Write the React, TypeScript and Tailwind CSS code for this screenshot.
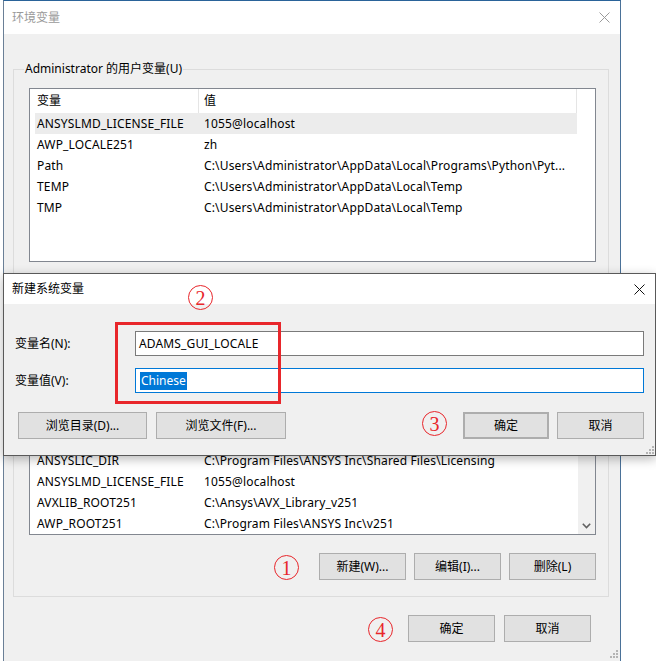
import React from "react";

type Row = { name: string; value: string; hl?: boolean };

const userRows: Row[] = [
  { name: "ANSYSLMD_LICENSE_FILE", value: "1055@localhost", hl: true },
  { name: "AWP_LOCALE251", value: "zh" },
  { name: "Path", value: "C:\\Users\\Administrator\\AppData\\Local\\Programs\\Python\\Pyt..." },
  { name: "TEMP", value: "C:\\Users\\Administrator\\AppData\\Local\\Temp" },
  { name: "TMP", value: "C:\\Users\\Administrator\\AppData\\Local\\Temp" },
];

const sysRows: Row[] = [
  { name: "", value: "" },
  { name: "", value: "" },
  { name: "", value: "" },
  { name: "", value: "" },
  { name: "ANSYSLIC_DIR", value: "C:\\Program Files\\ANSYS Inc\\Shared Files\\Licensing" },
  { name: "ANSYSLMD_LICENSE_FILE", value: "1055@localhost" },
  { name: "AVXLIB_ROOT251", value: "C:\\Ansys\\AVX_Library_v251" },
  { name: "AWP_ROOT251", value: "C:\\Program Files\\ANSYS Inc\\v251" },
];

function CloseX({ color }: { color: string }) {
  return (
    <svg width="11" height="11" viewBox="0 0 11 11">
      <path d="M0.5 0.5 L10.5 10.5 M10.5 0.5 L0.5 10.5" stroke={color} strokeWidth="1" fill="none" />
    </svg>
  );
}

function Grip() {
  return (
    <svg width="10" height="10" viewBox="0 0 10 10">
      <g fill="#b4b4b4">
        <rect x="8" y="2" width="2" height="2" />
        <rect x="5" y="5" width="2" height="2" />
        <rect x="8" y="5" width="2" height="2" />
        <rect x="2" y="8" width="2" height="2" />
        <rect x="5" y="8" width="2" height="2" />
        <rect x="8" y="8" width="2" height="2" />
      </g>
    </svg>
  );
}

function Btn({ label, w, extra = "" }: { label: string; w: string; extra?: string }) {
  return (
    <div
      className={`${w} h-[27px] flex items-center justify-center bg-[#e1e1e1] border border-[#adadad] ${extra}`}
    >
      {label}
    </div>
  );
}

function ListBox({ rows, height, scroll }: { rows: Row[]; height: string; scroll?: boolean }) {
  return (
    <div className={`ml-[15px] mr-[12px] mt-[18px] ${height} border border-[#828790] bg-white flex overflow-hidden`}>
      <div className="flex-1 pl-[5px] flex flex-col">
        <div className="flex h-[24px] shrink-0">
          <div className="w-[164px] pl-[2px] flex items-center border-r border-[#e5e5e5]">{scroll ? "" : "变量"}</div>
          <div className="w-[378px] pl-[5px] flex items-center border-r border-[#e5e5e5]">{scroll ? "" : "值"}</div>
        </div>
        {rows.map((r, i) => (
          <div
            key={i}
            className={`flex h-[21px] w-[542px] shrink-0 leading-[21px] tracking-[0.15px] ${r.hl ? "bg-[#ececec]" : ""}`}
          >
            <div className="w-[164px] pl-[2px] whitespace-nowrap overflow-hidden">{r.name}</div>
            <div className="w-[378px] pl-[5px] whitespace-nowrap overflow-hidden">{r.value}</div>
          </div>
        ))}
      </div>
      {scroll ? (
        <div className="w-[17px] bg-[#f0f0f0] flex flex-col justify-end items-center">
          <div className="h-[17px] flex items-center justify-center">
            <svg width="9" height="6" viewBox="0 0 9 6">
              <path d="M0.8 0.8 L4.5 4.5 L8.2 0.8" stroke="#606060" strokeWidth="1.6" fill="none" />
            </svg>
          </div>
        </div>
      ) : null}
    </div>
  );
}

function Circled({ n, left, top }: { n: string; left: string; top: string }) {
  return (
    <div
      className={`absolute ${left} ${top} w-[25px] h-[25px] rounded-full border-[1.5px] border-[#e8262b] flex items-center justify-center text-[#e8262b] font-['Liberation_Serif',serif] text-[20px] leading-none`}
    >
      {n}
    </div>
  );
}

export default function App() {
  return (
    <div className="relative w-[656px] h-[661px] overflow-hidden bg-white text-[12px] text-black font-['Noto_Sans','Noto_Sans_CJK_SC',sans-serif]">
      {/* Main window: 环境变量 */}
      <div className="ml-[3px] w-[618px] h-[700px] flex flex-col border-t border-l border-r border-t-[#2a6399] border-l-[#6a7f96] border-r-[#4a7198]">
        <div className="h-[33px] bg-white flex items-center justify-between pl-[8px] pr-[10px] shrink-0">
          <span className="text-[#9a9a9a]">环境变量</span>
          <CloseX color="#9a9a9a" />
        </div>
        <div className="flex-1 bg-[#f0f0f0] flex flex-col">
          {/* 用户变量 group */}
          <div className="relative mt-[35px] ml-[9px] mr-[11px] border border-[#dcdcdc] pb-[11px]">
            <span className="absolute -top-[10px] left-[10px] px-[1px] bg-[#f0f0f0] leading-[18px]">
              Administrator 的用户变量(U)
            </span>
            <ListBox rows={userRows} height="h-[174px]" />
            <div className="flex justify-end gap-[8px] mr-[12px] mt-[14px]">
              <Btn label="" w="w-[87px]" />
              <Btn label="" w="w-[87px]" />
              <Btn label="" w="w-[87px]" />
            </div>
          </div>
          {/* 系统变量 group */}
          <div className="relative mt-[7px] ml-[9px] mr-[11px] border border-[#dcdcdc] pb-[16px]">
            <ListBox rows={sysRows} height="h-[194px]" scroll />
            <div className="flex justify-end gap-[8px] mr-[12px] mt-[18px]">
              <Btn label="新建(W)..." w="w-[87px]" />
              <Btn label="编辑(I)..." w="w-[87px]" />
              <Btn label="删除(L)" w="w-[87px]" />
            </div>
          </div>
          <div className="flex justify-end gap-[9px] mr-[29px] mt-[18px]">
            <Btn label="确定" w="w-[87px]" />
            <Btn label="取消" w="w-[87px]" />
          </div>
        </div>
      </div>
      <div className="absolute left-[608px] top-[648px]">
        <Grip />
      </div>

      {/* Dialog: 新建系统变量 */}
      <div className="absolute left-[3px] top-[273px] w-[653px] h-[183px] border border-[#595959] flex flex-col shadow-[0_3px_10px_rgba(0,0,0,0.28)]">
        <div className="h-[30px] bg-white flex items-center justify-between pl-[8px] pr-[10px] shrink-0">
          <span>新建系统变量</span>
          <CloseX color="#111111" />
        </div>
        <div className="relative flex-1 bg-[#f0f0f0] flex flex-col pt-[27px] pl-[11px] pr-[11px]">
          <div className="flex items-center h-[25px]">
            <span className="w-[120px]">变量名(N):</span>
            <div className="flex-1 h-[25px] bg-white border border-[#7a7a7a] flex items-center pl-[3px] tracking-[0.15px]">
              ADAMS_GUI_LOCALE
            </div>
          </div>
          <div className="flex items-center h-[25px] mt-[12px]">
            <span className="w-[120px]">变量值(V):</span>
            <div className="flex-1 h-[25px] bg-white border border-[#0078d7] flex items-center pl-[4px]">
              <span className="bg-[#0078d7] text-white leading-[18px] px-[1px]">Chinese</span>
            </div>
          </div>
          <div className="flex items-center mt-[19px] pl-[3px]">
            <Btn label="浏览目录(D)..." w="w-[129px]" />
            <Btn label="浏览文件(F)..." w="w-[130px]" extra="ml-[9px]" />
            <div className="flex-1" />
            <Btn label="确定" w="w-[86px]" extra="border-2 border-[#0078d7]" />
            <Btn label="取消" w="w-[87px]" extra="ml-[8px]" />
          </div>
          <div className="absolute right-[1px] bottom-[1px]">
            <Grip />
          </div>
        </div>
      </div>

      {/* Annotations */}
      <div className="absolute left-[115px] top-[322px] w-[166px] h-[82px] border-[3px] border-[#e8262b]" />
      <Circled n="2" left="left-[188px]" top="top-[285px]" />
      <Circled n="3" left="left-[422px]" top="top-[411px]" />
      <Circled n="1" left="left-[274px]" top="top-[555px]" />
      <Circled n="4" left="left-[368px]" top="top-[617px]" />
    </div>
  );
}
